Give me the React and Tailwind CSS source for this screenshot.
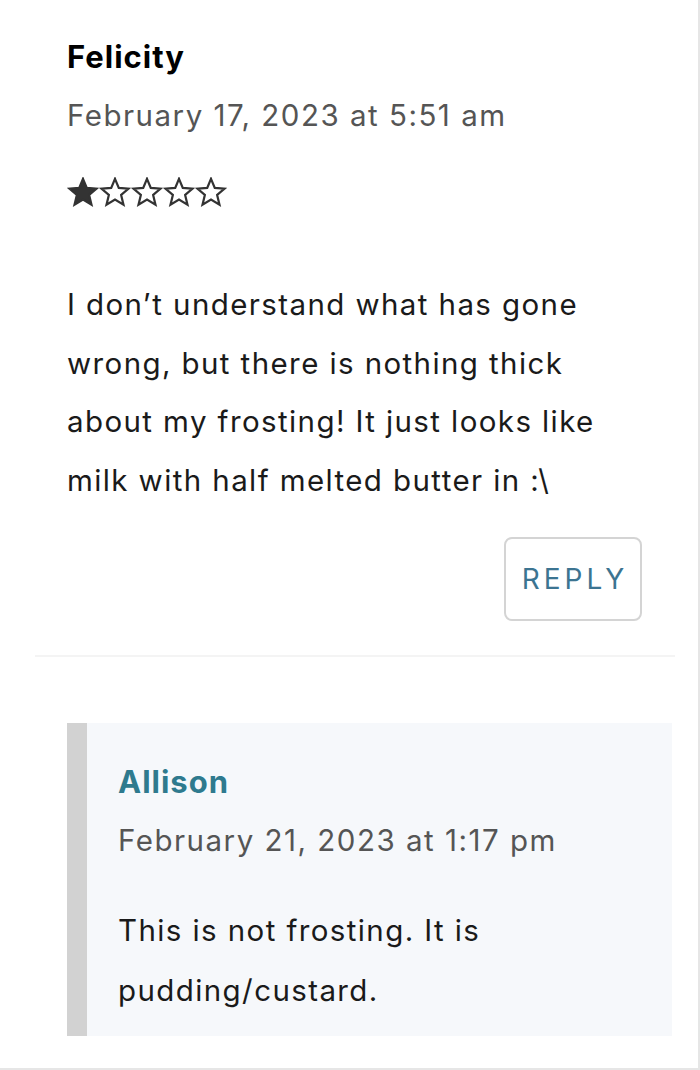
import React from "react";

const Star = ({ filled }) => (
  <svg width="32" height="30" viewBox="0 0 24 23" className="shrink-0">
    <path
      d="M12 1.4l2.9 6.9 7.5.6-5.7 4.9 1.8 7.4L12 17.3l-6.5 3.9 1.8-7.4-5.7-4.9 7.5-.6z"
      fill={filled ? "#333333" : "none"}
      stroke="#333333"
      strokeWidth="1.7"
      strokeLinejoin="miter"
    />
  </svg>
);

const App = () => {
  return (
    <div
      className="w-[700px] h-[1070px] bg-white border-r-2 border-b-2 border-[#e6e6e6] overflow-hidden text-[#1a1a1a]"
      style={{ fontFamily: "Inter, 'Noto Sans', sans-serif" }}
    >
      {/* top comment */}
      <div className="pl-[67px] pt-[37px]">
        <div className="text-[31px] leading-[40px] font-bold tracking-[1px] text-black">Felicity</div>
        <div className="mt-[18px] text-[29.5px] leading-[40px] tracking-[1.5px] text-[#555555]">
          February 17, 2023 at 5:51 am
        </div>
        <div className="mt-[42px] flex">
          <Star filled />
          <Star />
          <Star />
          <Star />
          <Star />
        </div>
        <p className="mt-[68px] w-[545px] text-[29.5px] leading-[58.5px] tracking-[1.4px] text-[#1a1a1a]">
          I don’t understand what has gone wrong, but there is nothing thick about my frosting! It just looks like milk with half melted butter in :\
        </p>
        <div className="mt-[28px] flex justify-end pr-[56px]">
          <button className="w-[138px] h-[84px] rounded-lg border-2 border-[#d4d4d4] text-[28px] tracking-[4px] pl-[4px] text-[#3c7491] flex items-center justify-center">
            REPLY
          </button>
        </div>
      </div>

      <div className="mt-[34px] ml-[35px] w-[640px] h-[2px] bg-[#f4f4f4]" />

      {/* reply */}
      <div className="mt-[66px] ml-[67px] w-[605px] bg-[#f6f8fb] border-l-[20px] border-[#d2d2d2] pl-[31px] pt-[39px] pb-[16px]">
        <div className="text-[31px] leading-[40px] font-bold tracking-[1px] text-[#2e7a8e]">Allison</div>
        <div className="mt-[18px] text-[29.5px] leading-[40px] tracking-[1.5px] text-[#555555]">
          February 21, 2023 at 1:17 pm
        </div>
        <p className="mt-[40px] w-[440px] text-[29.5px] leading-[60px] tracking-[1.4px] text-[#1a1a1a]">
          This is not frosting. It is pudding/custard.
        </p>
      </div>
    </div>
  );
};

export default App;
